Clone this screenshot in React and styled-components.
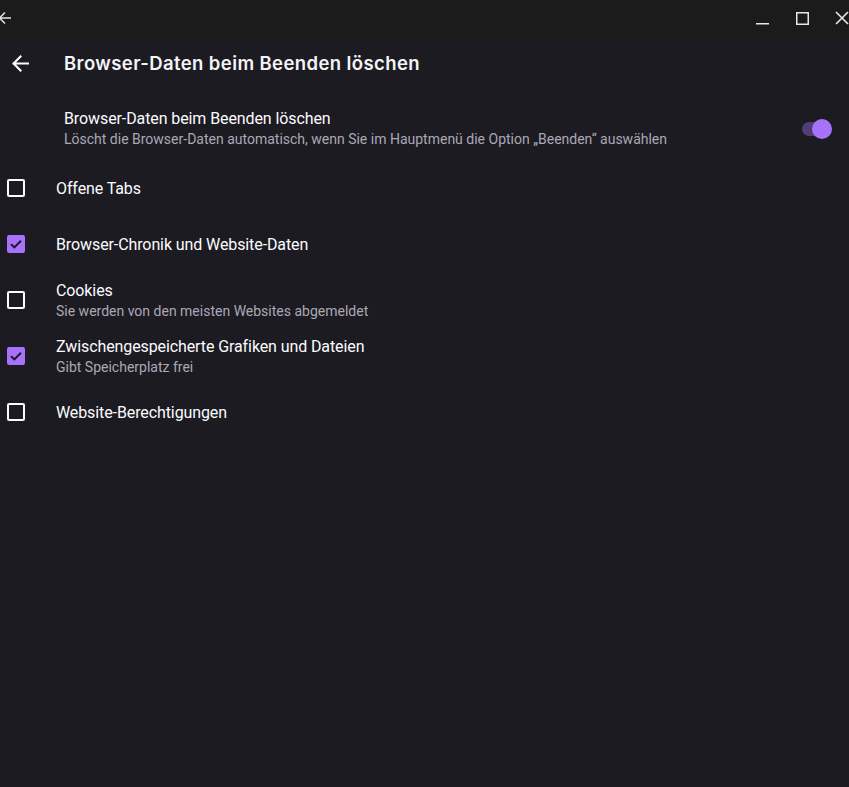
import React from "react";
import styled, { createGlobalStyle } from "styled-components";

const Global = createGlobalStyle`
  html, body { margin: 0; padding: 0; background: #1c1b22; }
  body { font-family: Roboto, "Noto Sans", sans-serif; }
  #root { min-height: 787px; }
`;

const Page = styled.div`
  width: 849px;
  height: 787px;
  background: #1c1b22;
  color: #fbfbfe;
  display: flex;
  flex-direction: column;
  overflow: hidden;
`;

const TitleBar = styled.div`
  height: 36px;
  background: #1b1b1b;
  display: flex;
  align-items: center;
  justify-content: space-between;
  flex-shrink: 0;
`;

const WinButtons = styled.div`
  display: flex;
  align-items: center;
`;

const WinBtn = styled.div`
  width: 40px;
  height: 36px;
  display: flex;
  align-items: center;
  justify-content: flex-end;
  color: #e8e8e8;
`;

const AppBar = styled.div`
  height: 54px;
  display: flex;
  align-items: center;
  padding-left: 10px;
  flex-shrink: 0;
`;

const BackBtn = styled.div`
  width: 20px;
  height: 20px;
  display: flex;
  align-items: center;
  justify-content: center;
  margin-right: 34px;
`;

const Title = styled.h1`
  margin: 0;
  font-family: Inter, "Noto Sans", sans-serif;
  font-weight: 600;
  font-size: 18.5px;
  letter-spacing: 0.4px;
  color: #f4f4f7;
`;

const SwitchRow = styled.div`
  display: flex;
  align-items: center;
  padding: 19px 15px 12px 64px;
`;

const TextBlock = styled.div`
  flex: 1;
  display: flex;
  flex-direction: column;
  gap: 3px;
`;

const Primary = styled.div`
  font-size: 16px;
  line-height: 19px;
  letter-spacing: -0.1px;
  color: #fbfbfe;
`;

const Secondary = styled.div`
  font-size: 14px;
  line-height: 17px;
  color: #aba8b6;
`;

const Track = styled.div`
  position: relative;
  width: 20px;
  height: 14px;
  border-radius: 7px;
  background: #4f3d78;
  margin-right: 12px;
`;

const Thumb = styled.div`
  position: absolute;
  right: -10px;
  top: -3px;
  width: 20px;
  height: 20px;
  border-radius: 50%;
  background: #a672fa;
`;

const List = styled.div`
  display: flex;
  flex-direction: column;
`;

const CheckRow = styled.div`
  height: 56px;
  display: flex;
  align-items: center;
  padding-left: 7px;
`;

const Box = styled.div`
  width: 18px;
  height: 18px;
  box-sizing: border-box;
  border-radius: 2px;
  border: ${(p) => (p.$checked ? "none" : "2px solid #fbfbfe")};
  background: ${(p) => (p.$checked ? "#a672fa" : "transparent")};
  display: flex;
  align-items: center;
  justify-content: center;
  margin-right: 31px;
  flex-shrink: 0;
`;

const items = [
  { title: "Offene Tabs", checked: false },
  { title: "Browser-Chronik und Website-Daten", checked: true },
  { title: "Cookies", sub: "Sie werden von den meisten Websites abgemeldet", checked: false },
  { title: "Zwischengespeicherte Grafiken und Dateien", sub: "Gibt Speicherplatz frei", checked: true },
  { title: "Website-Berechtigungen", checked: false },
];

const Arrow = ({ size = 16, color = "#fbfbfe", sw = 2 }) => (
  <svg width={size} height={size} viewBox="0 0 16 16" fill="none">
    <path d="M15 8H1.5M8 1.5L1.5 8L8 14.5" stroke={color} strokeWidth={sw} strokeLinecap="square" />
  </svg>
);

export default function App() {
  return (
    <>
      <Global />
      <Page>
        <TitleBar>
          <div style={{ marginLeft: -2, display: "flex" }}>
            <svg width="14" height="14" viewBox="0 0 14 14" fill="none">
              <path d="M13 7H1.5M7 1.5L1.5 7L7 12.5" stroke="#e6e6e6" strokeWidth="1.5" />
            </svg>
          </div>
          <WinButtons>
            <WinBtn>
              <svg width="14" height="14" viewBox="0 0 14 14"><rect x="1" y="12" width="13" height="1.5" fill="#e8e8e8" /></svg>
            </WinBtn>
            <WinBtn>
              <svg width="14" height="14" viewBox="0 0 14 14" fill="none"><rect x="1.75" y="1.75" width="11.5" height="11.5" stroke="#e8e8e8" strokeWidth="1.5" /></svg>
            </WinBtn>
            <WinBtn>
              <svg width="14" height="14" viewBox="0 0 14 14" fill="none"><path d="M1 1L13 13M13 1L1 13" stroke="#e8e8e8" strokeWidth="1.6" /></svg>
            </WinBtn>
          </WinButtons>
        </TitleBar>
        <AppBar>
          <BackBtn>
            <Arrow size={17} />
          </BackBtn>
          <Title>Browser-Daten beim Beenden löschen</Title>
        </AppBar>
        <SwitchRow>
          <TextBlock>
            <Primary>Browser-Daten beim Beenden löschen</Primary>
            <Secondary>Löscht die Browser-Daten automatisch, wenn Sie im Hauptmenü die Option „Beenden“ auswählen</Secondary>
          </TextBlock>
          <Track>
            <Thumb />
          </Track>
        </SwitchRow>
        <List>
          {items.map((it) => (
            <CheckRow key={it.title}>
              <Box $checked={it.checked}>
                {it.checked && (
                  <svg width="14" height="14" viewBox="0 0 14 14" fill="none">
                    <path d="M2 7.2L5.4 10.4L12 3.8" stroke="#1c1b22" strokeWidth="2" />
                  </svg>
                )}
              </Box>
              <TextBlock>
                <Primary>{it.title}</Primary>
                {it.sub && <Secondary>{it.sub}</Secondary>}
              </TextBlock>
            </CheckRow>
          ))}
        </List>
      </Page>
    </>
  );
}
